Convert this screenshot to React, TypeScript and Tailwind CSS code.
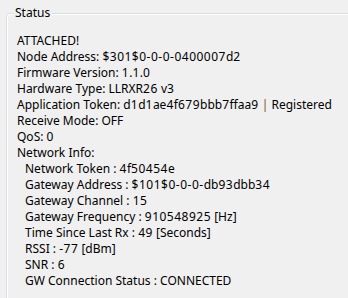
import React from "react";

const main = [
  "ATTACHED!",
  "Node Address: $301$0-0-0-0400007d2",
  "Firmware Version: 1.1.0",
  "Hardware Type: LLRXR26 v3",
];
const after = ["Receive Mode: OFF", "QoS: 0", "Network Info:"];
const net = [
  "Network Token : 4f50454e",
  "Gateway Address : $101$0-0-0-db93dbb34",
  "Gateway Channel : 15",
  "Gateway Frequency : 910548925 [Hz]",
  "Time Since Last Rx : 49 [Seconds]",
  "RSSI : -77 [dBm]",
  "SNR : 6",
  "GW Connection Status : CONNECTED",
];

function T({ text }: { text: string }) {
  const parts = text.split(/([0-9$\-]+)/);
  return (
    <>
      {parts.map((p, i) =>
        i % 2 === 1 ? (
          <span key={i} className="tracking-[0.5px]">
            {p}
          </span>
        ) : (
          <React.Fragment key={i}>{p}</React.Fragment>
        )
      )}
    </>
  );
}

export default function App() {
  return (
    <div
      className="w-[348px] h-[298px] bg-[#f0f0f0] overflow-hidden text-[12px] leading-[16px] text-black"
      style={{ fontFamily: '"Noto Sans", sans-serif' }}
    >
      <div className="relative ml-[6px] mt-[13px] w-[360px] h-[300px] border border-[#d5dfe5] rounded-[3px] shadow-[inset_1px_1px_0_#ffffff] pl-[10px] pt-[19px]">
        <span className="absolute left-[6px] top-[-9px] px-[2px] bg-[#f0f0f0] whitespace-nowrap">
          Status
        </span>
        <div className="flex flex-col whitespace-nowrap">
          {main.map((t) => (
            <div key={t}>
              <T text={t} />
            </div>
          ))}
          <div>
            <T text="Application Token: d1d1ae4f679bbb7ffaa9" />{" "}
            <span className="text-[#7a5220]">|</span> Registered
          </div>
          {after.map((t) => (
            <div key={t}>
              <T text={t} />
            </div>
          ))}
          {net.map((t) => (
            <div key={t} className="pl-[8px]">
              <T text={t} />
            </div>
          ))}
        </div>
      </div>
    </div>
  );
}
